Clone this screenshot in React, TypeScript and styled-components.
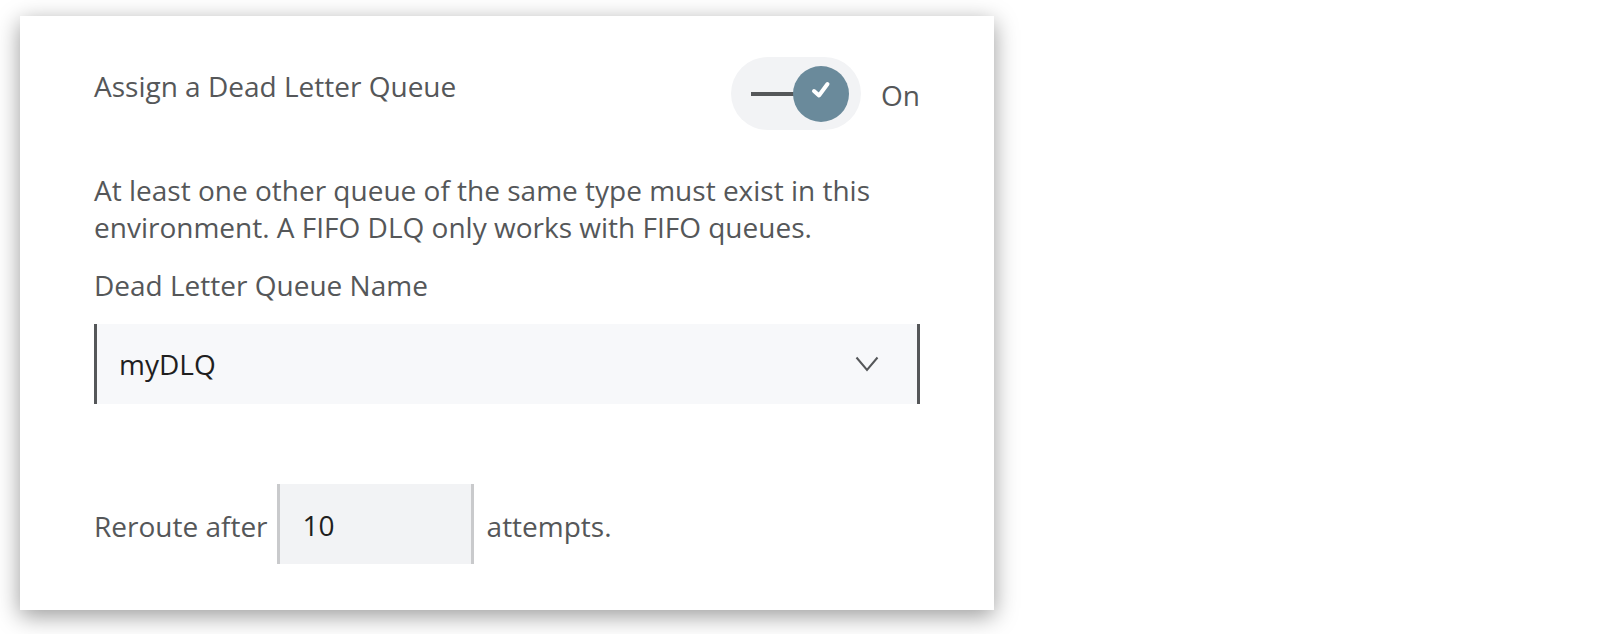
import React from "react";
import styled, { createGlobalStyle } from "styled-components";

const GlobalStyle = createGlobalStyle`
  html, body { margin: 0; padding: 0; background: #ffffff; }
  body { font-family: "Open Sans", "Noto Sans", sans-serif; }
`;

const Page = styled.div`
  padding: 16px 0 0 20px;
  width: 1606px;
  height: 634px;
  box-sizing: border-box;
`;

const Card = styled.section`
  width: 974px;
  height: 594px;
  box-sizing: border-box;
  background: #fff;
  box-shadow: 0 6px 22px rgba(0, 0, 0, 0.4);
  padding: 41px 74px 0 74px;
  display: flex;
  flex-direction: column;
  color: #555759;
  font-size: 28px;
  line-height: 37px;
`;

const Header = styled.div`
  display: flex;
  justify-content: space-between;
  align-items: flex-start;
`;

const Title = styled.div`
  margin-top: 11px;
`;

const ToggleWrap = styled.label`
  display: flex;
  align-items: center;
  gap: 20px;
`;

const Pill = styled.div`
  width: 130px;
  height: 73px;
  border-radius: 37px;
  background: #f2f3f5;
  display: flex;
  align-items: center;
  padding-left: 20px;
  box-sizing: border-box;
`;

const Track = styled.div`
  width: 44px;
  height: 4px;
  background: #555759;
`;

const Knob = styled.div`
  width: 56px;
  height: 56px;
  border-radius: 50%;
  background: #6a8a9b;
  margin-left: -2px;
  display: flex;
  align-items: center;
  justify-content: center;
`;

const OnText = styled.span`
  margin-top: 4px;
`;

const Help = styled.p`
  margin: 42px 0 0 0;
`;

const FieldLabel = styled.div`
  margin-top: 21px;
`;

const Select = styled.div`
  margin-top: 20px;
  height: 80px;
  background: #f7f8fa;
  border-left: 3px solid #555759;
  border-right: 3px solid #555759;
  display: flex;
  align-items: center;
  justify-content: space-between;
  padding: 0 38px 0 22px;
  color: #1f1f1f;
`;

const Value = styled.span`
  color: #1f1f1f;
`;

const RerouteRow = styled.div`
  margin-top: 80px;
  display: flex;
  align-items: center;
`;

const RowText = styled.span`
  padding-top: 4px;
`;

const NumberBox = styled.div`
  width: 197px;
  height: 80px;
  box-sizing: border-box;
  background: #f2f3f5;
  border-left: 3px solid #c9cacc;
  border-right: 3px solid #c9cacc;
  display: flex;
  align-items: center;
  padding: 3px 0 0 23px;
  margin: 0 13px 0 9px;
  color: #1f1f1f;
`;

export default function App() {
  return (
    <>
      <GlobalStyle />
      <Page>
        <Card>
          <Header>
            <Title>Assign a Dead Letter Queue</Title>
            <ToggleWrap>
              <Pill>
                <Track />
                <Knob>
                  <svg width="22" height="20" viewBox="0 0 22 20" style={{ marginTop: -8 }}>
                    <path d="M4 11 L9 15.5 L17.5 4" fill="none" stroke="#fff" strokeWidth="4" strokeLinecap="round" strokeLinejoin="round" />
                  </svg>
                </Knob>
              </Pill>
              <OnText>On</OnText>
            </ToggleWrap>
          </Header>
          <Help>
            At least one other queue of the same type must exist in this environment. A FIFO DLQ only works with FIFO queues.
          </Help>
          <FieldLabel>Dead Letter Queue Name</FieldLabel>
          <Select>
            <Value>myDLQ</Value>
            <svg width="24" height="16" viewBox="0 0 24 16">
              <path d="M1.5 1.5 L12 14 L22.5 1.5" fill="none" stroke="#555759" strokeWidth="2" />
            </svg>
          </Select>
          <RerouteRow>
            <RowText>Reroute after</RowText>
            <NumberBox>10</NumberBox>
            <RowText>attempts.</RowText>
          </RerouteRow>
        </Card>
      </Page>
    </>
  );
}
